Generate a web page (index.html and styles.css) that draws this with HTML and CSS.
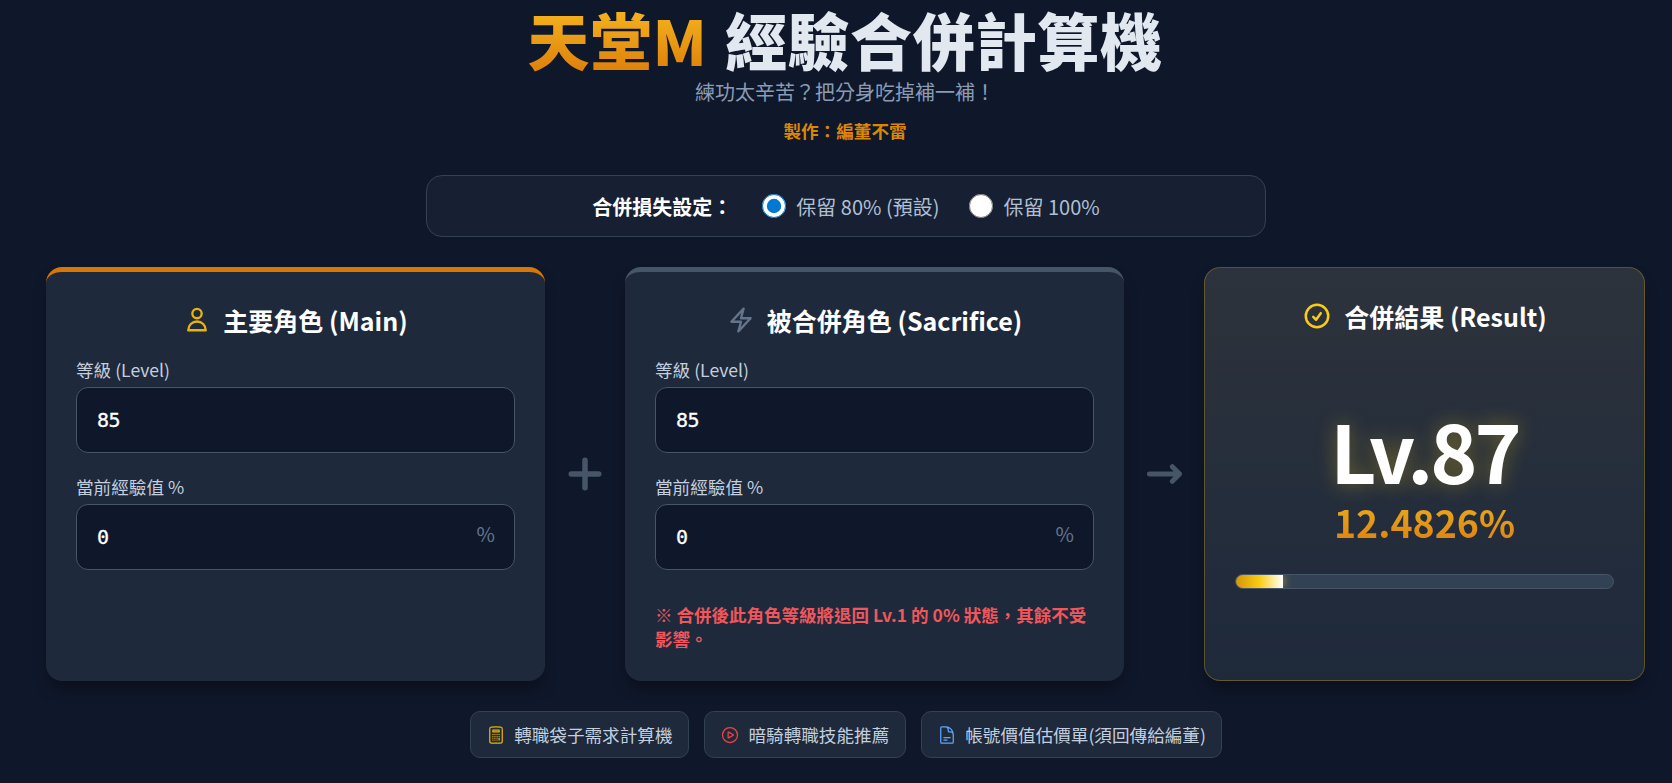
FILE: index.html
```html
<!DOCTYPE html>
<html lang="zh-Hant">
<head>
  <meta charset="UTF-8">
  <meta name="viewport" content="width=device-width, initial-scale=1.0">
  <title>天堂M 經驗合併計算機</title>
  <link rel="stylesheet" href="styles.css">
</head>
<body>
  <header class="top">
    <h1><span class="brand">天堂M</span> 經驗合併計算機</h1>
    <p class="sub">練功太辛苦？把分身吃掉補一補！</p>
    <p class="credit">製作：編董不雷</p>
  </header>

  <div class="settings">
    <span class="settings-label">合併損失設定：</span>
    <label class="opt"><input type="radio" name="rate" checked> 保留 80% (預設)</label>
    <label class="opt"><input type="radio" name="rate"> 保留 100%</label>
  </div>

  <main class="board">
    <section class="card card-main">
      <h2>
        <svg class="ic ic-amber" viewBox="0 0 24 24"><circle cx="12" cy="6.5" r="4"/><path d="M4.5 20.75a7.5 7.5 0 0 1 15 0Z"/></svg>
        主要角色 (Main)
      </h2>
      <label class="field-label">等級 (Level)</label>
      <input class="num" type="text" value="85">
      <label class="field-label">當前經驗值 %</label>
      <div class="with-unit">
        <input class="num" type="text" value="0">
        <span class="unit">%</span>
      </div>
    </section>

    <div class="op">
      <svg class="op-plus" viewBox="0 0 24 24"><path d="M12 4.5v15m7.5-7.5h-15"/></svg>
    </div>

    <section class="card card-sac">
      <h2>
        <svg class="ic ic-grey" viewBox="0 0 24 24"><path d="m3.75 13.5 10.5-11.25L12 10.5h8.25L9.75 21.75 12 13.5H3.75Z"/></svg>
        被合併角色 (Sacrifice)
      </h2>
      <label class="field-label">等級 (Level)</label>
      <input class="num" type="text" value="85">
      <label class="field-label">當前經驗值 %</label>
      <div class="with-unit">
        <input class="num" type="text" value="0">
        <span class="unit">%</span>
      </div>
      <p class="warn">※ 合併後此角色等級將退回 Lv.1 的 0% 狀態，其餘不受影響。</p>
    </section>

    <div class="op">
      <svg class="op-arrow" viewBox="0 0 24 24"><path d="M4 12h16.500M16.500 8l4 4-4 4"/></svg>
    </div>

    <section class="card card-result">
      <h2>
        <svg class="ic ic-check ic-yellow" viewBox="0 0 24 24"><path d="M9 12.75 11.25 15 15 9.75M21 12a9 9 0 1 1-18 0 9 9 0 0 1 18 0Z"/></svg>
        合併結果 (Result)
      </h2>
      <div class="result-level">Lv.87</div>
      <div class="result-pct">12.4826%</div>
      <div class="bar"><div class="bar-fill" style="width: 12.48%"></div></div>
    </section>
  </main>

  <nav class="links">
    <a href="#">
      <svg class="ic-s ic-amber" viewBox="0 0 24 24"><path d="M15.75 15.75V18m-7.5-6.75h.008v.008H8.25v-.008Zm0 2.25h.008v.008H8.25V13.5Zm0 2.25h.008v.008H8.25v-.008Zm0 2.25h.008v.008H8.25V18Zm2.498-6.75h.007v.008h-.007v-.008Zm0 2.25h.007v.008h-.007V13.5Zm0 2.25h.007v.008h-.007v-.008Zm0 2.25h.007v.008h-.007V18Zm2.504-6.75h.008v.008h-.008v-.008Zm0 2.25h.008v.008h-.008V13.5Zm0 2.25h.008v.008h-.008v-.008Zm0 2.25h.008v.008h-.008V18Zm2.498-6.75h.008v.008h-.008v-.008Zm0 2.25h.008v.008h-.008V13.5ZM8.25 6h7.5v2.25h-7.5V6ZM12 2.25c-1.892 0-3.758.11-5.593.322C5.307 2.7 4.5 3.65 4.5 4.757V19.5a2.25 2.25 0 0 0 2.25 2.25h10.5a2.25 2.25 0 0 0 2.25-2.25V4.757c0-1.108-.806-2.057-1.907-2.185A48.507 48.507 0 0 0 12 2.25Z"/></svg>
      轉職袋子需求計算機
    </a>
    <a href="#">
      <svg class="ic-s ic-red" viewBox="0 0 24 24"><path d="M21 12a9 9 0 1 1-18 0 9 9 0 0 1 18 0Z"/><path d="M15.91 11.672a.375.375 0 0 1 0 .656l-5.603 3.113a.375.375 0 0 1-.557-.328V8.887c0-.286.307-.466.557-.327l5.603 3.112Z"/></svg>
      暗騎轉職技能推薦
    </a>
    <a href="#">
      <svg class="ic-s ic-blue" viewBox="0 0 24 24"><path d="M19.5 14.25v-2.625a3.375 3.375 0 0 0-3.375-3.375h-1.5A1.125 1.125 0 0 1 13.5 7.125v-1.5a3.375 3.375 0 0 0-3.375-3.375H8.25m0 12.75h7.5m-7.5 3H12M10.500 2.250H5.625c-.621 0-1.125.504-1.125 1.125v17.25c0 .621.504 1.125 1.125 1.125h12.75c.621 0 1.125-.504 1.125-1.125V11.25a9 9 0 0 0-9-9Z"/></svg>
      帳號價值估價單(須回傳給編董)
    </a>
  </nav>
</body>
</html>
```

FILE: styles.css
```css
* { box-sizing: border-box; }
html, body { height: 100%; }
body { margin: 0; padding: 0 28px 0 46px; background: #0f172a; color: #e2e8f0; font-family: "Noto Sans CJK TC", "Noto Sans", sans-serif; overflow: hidden; display: flex; flex-direction: column; align-items: center; }

.top { text-align: center; }
h1 { margin: 0 0 3px; font-size: 62px; line-height: 71px; padding-top: 4px; font-weight: 900; letter-spacing: 0.5px; color: #e2e8f0; }
.brand { margin-right: 3px; background: linear-gradient(180deg, #fbbf24, #d97706); -webkit-background-clip: text; background-clip: text; color: transparent; }
.sub { margin: 0; font-size: 20px; line-height: 28px; color: #8a9cb5; }
.credit { margin: 13px 0 0; font-size: 17.6px; line-height: 24px; font-weight: 700; color: #d98706; }

.settings { margin: 32px 0 0 2px; width: 840px; height: 62px; display: flex; align-items: center; justify-content: center; gap: 30px; background: #172033; border: 1px solid #334155; border-radius: 16px; }
.settings-label { font-size: 20px; font-weight: 700; color: #fff; }
.opt { display: flex; align-items: center; gap: 10px; font-size: 20px; color: #b0bfd2; }
.opt input { width: 24px; height: 24px; margin: 0; accent-color: #0078d4; }

.board { margin-top: 30px; width: 100%; display: grid; grid-template-columns: 499px 80px 499px 80px 441px; height: 414px; }
.card { background: #1e293b; border-radius: 16px; padding: 30px; box-shadow: 0 10px 15px -3px rgba(0,0,0,0.35); display: flex; flex-direction: column; }
.card-main { border-top: 5px solid #d97706; }
.card-sac { border-top: 5px solid #475569; }
.card-result { background: linear-gradient(180deg, #2d333c, #1e293b); border: 1px solid rgba(234,179,8,0.3); text-align: center; }

h2 { margin: 0 0 20px; font-size: 25px; line-height: 36px; font-weight: 700; color: #fff; display: flex; align-items: center; justify-content: center; gap: 12px; }
.ic { width: 28px; height: 28px; fill: none; stroke-width: 2; stroke-linecap: round; stroke-linejoin: round; }
.ic-check { width: 30px; height: 30px; }
.ic-s { width: 20px; height: 20px; fill: none; stroke-width: 1.5; stroke-linecap: round; stroke-linejoin: round; }
.ic-amber { stroke: #eab308; }
.ic-grey { stroke: #64748b; }
.ic-yellow { stroke: #facc15; }
.ic-red { stroke: #ef4444; }
.ic-blue { stroke: #60a5fa; }

.field-label { display: block; font-size: 17.6px; line-height: 24px; color: #c3cfdf; margin-bottom: 5px; }
.num { width: 100%; height: 66px; padding: 0 20px; background: #0f172a; border: 1px solid #475569; border-radius: 12px; color: #fff; font-family: "DejaVu Sans Mono", monospace; font-size: 20px; letter-spacing: -0.6px; -webkit-text-stroke: 0.3px #fff; outline: none; }
.num + .field-label { margin-top: 22px; }
.with-unit { position: relative; }
.unit { position: absolute; right: 20px; top: 18px; font-size: 20px; line-height: 24px; color: #64748b; }
.warn { margin: 33px 0 0; font-size: 17.5px; line-height: 24px; font-weight: 700; color: #f0565c; }

.op { display: flex; align-items: center; justify-content: center; }
.op svg { width: 44px; height: 44px; fill: none; stroke: #475569; stroke-linecap: round; stroke-linejoin: round; }
.op-plus { stroke-width: 3; }
.op-arrow { stroke-width: 2.7; }

.result-level { margin-top: 47px; font-size: 80px; line-height: 97px; font-weight: 700; letter-spacing: -3px; color: #fff; text-shadow: 0 0 20px rgba(250,204,21,0.35); }
.result-pct { font-size: 37.5px; line-height: 48px; font-weight: 700; background: linear-gradient(180deg, #eab020, #dd7f10); -webkit-background-clip: text; background-clip: text; color: transparent; }
.bar { margin-top: 28px; height: 15px; background: #334155; border: 1px solid #475569; border-radius: 8px; overflow: hidden; }
.bar-fill { height: 100%; background: linear-gradient(90deg, #d4960a, #facc15, #fff); box-shadow: 0 0 10px rgba(250,204,21,0.6); }

.links { margin: 30px 0 0 2px; display: flex; gap: 15px; }
.links a { height: 47px; padding: 0 15.5px; display: flex; align-items: center; gap: 8px; background: #1e293b; border: 1px solid #334155; border-radius: 10px; color: #c3cfdf; text-decoration: none; font-size: 17.6px; }
```
